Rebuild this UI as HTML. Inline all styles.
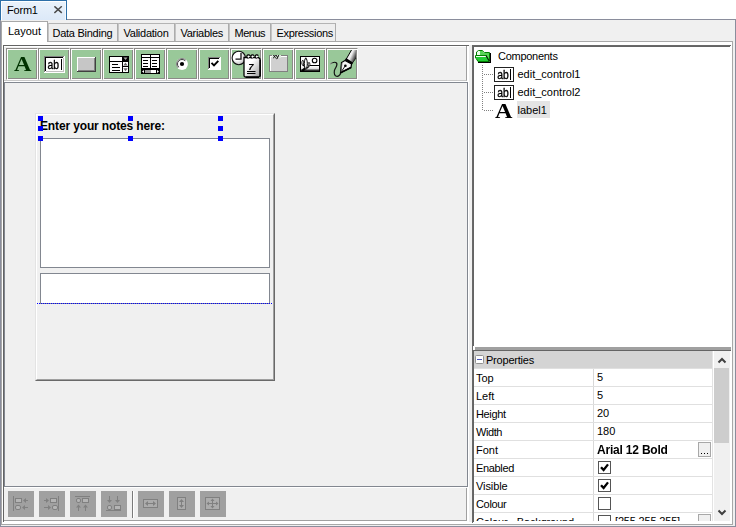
<!DOCTYPE html>
<html><head><meta charset="utf-8"><title>Form1</title>
<style>
html,body{margin:0;padding:0;}
body{width:736px;height:527px;position:relative;overflow:hidden;background:#f0f0f0;font-family:"Liberation Sans",sans-serif;font-size:11px;color:#000;}
.a{position:absolute;box-sizing:border-box;}
.t{position:absolute;white-space:nowrap;line-height:14px;}
.tab{position:absolute;box-sizing:border-box;top:23px;height:18px;border:1px solid;border-color:#b4b4b4 #acacac #acacac #c4c4c4;border-bottom:none;background:#eeeeee;padding-left:4.500px;line-height:18px;white-space:nowrap;}
.tb{position:absolute;box-sizing:border-box;top:48px;width:32px;height:32px;background:#99c899;border:1px solid;border-color:#8c8a88 #fff #fff #8c8a88;box-shadow:inset 1px 1px 0 #fff,inset -1px -1px 0 #8c8a88;}
.bb{position:absolute;box-sizing:border-box;top:491px;width:26px;height:26px;background:#a0a0a0;}
.h{position:absolute;width:5px;height:5px;background:#0000ff;}
.row{position:absolute;left:474px;width:238px;height:19px;box-sizing:border-box;border-top:1px solid #e0e0e0;background:#fff;}
.row .n{position:absolute;left:2px;top:2px;line-height:14px;}
.row .v{position:absolute;left:123px;top:1px;line-height:14px;}
.row .sep{position:absolute;left:119px;top:0;width:1px;height:18px;background:#d8d8d8;}
.cb{position:absolute;left:124px;top:2px;width:13px;height:13px;box-sizing:border-box;border:1px solid #555;background:#fff;}
</style></head><body>

<!-- top document tab strip -->
<div class="a" style="left:0;top:0;width:736px;height:19px;background:#fff;"></div>
<div class="a" style="left:0;top:19px;width:736px;height:1px;background:#8a8d9c;"></div>
<div class="a" style="left:0;top:0;width:67px;height:20px;background:linear-gradient(#eaf2fb,#dce9f8);border:1px solid #2d6fa8;border-bottom:none;box-shadow:inset 1px 1px 0 #fff,inset -1px 0 0 #f4f8fd;"></div>
<div class="t" style="left:7px;top:3px;letter-spacing:-0.2px;">Form1</div>
<svg class="a" style="left:54px;top:6px;" width="9" height="9" viewBox="0 0 9 9"><path d="M0.400 0.300L7.800 6.900M7.800 0.300L0.400 6.900" stroke="#484848" stroke-width="1.450" fill="none"/></svg>

<!-- outer frame -->
<div class="a" style="left:0;top:20px;width:1px;height:507px;background:#8a8d9c;"></div>
<div class="a" style="left:735px;top:20px;width:1px;height:507px;background:#8a8d9c;"></div>
<div class="a" style="left:0;top:526px;width:736px;height:1px;background:#8a8d9c;"></div>
<!-- tab page -->
<div class="a" style="left:1px;top:41px;width:732px;height:484px;background:#fff;border:1px solid #a8a8a8;"></div>

<!-- inner tabs -->
<div class="tab" style="left:48px;width:70px;letter-spacing:-0.26px;padding-left:3.5px;">Data Binding</div>
<div class="tab" style="left:118px;width:57px;letter-spacing:-0.25px;">Validation</div>
<div class="tab" style="left:175px;width:54px;letter-spacing:-0.283px;">Variables</div>
<div class="tab" style="left:229px;width:42px;letter-spacing:-0.506px;">Menus</div>
<div class="tab" style="left:271px;width:65px;letter-spacing:-0.311px;">Expressions</div>
<div class="a" style="left:1px;top:21px;width:47px;height:21px;background:#fff;border:1px solid #a8a8a8;border-bottom:none;padding-left:6px;line-height:19px;white-space:nowrap;">Layout</div>

<!-- left container -->
<div class="a" style="left:3px;top:45px;width:466px;height:477px;background:#fff;border-left:1px solid #646464;border-top:1px solid #646464;"></div>
<!-- toolbar panel -->
<div class="a" style="left:4px;top:47px;width:463px;height:34px;background:#f0f0f0;border-right:1px solid #a0a0a0;border-bottom:1px solid #c8c8c8;"></div>
<div class="a" style="left:466px;top:46px;width:1px;height:1px;background:#a0a0a0;"></div>
<div class="tb" style="left:6px;"></div>
<div class="tb" style="left:38px;"></div>
<div class="tb" style="left:70px;"></div>
<div class="tb" style="left:102px;"></div>
<div class="tb" style="left:134px;"></div>
<div class="tb" style="left:166px;"></div>
<div class="tb" style="left:198px;"></div>
<div class="tb" style="left:230px;"></div>
<div class="tb" style="left:262px;"></div>
<div class="tb" style="left:294px;"></div>
<div class="tb" style="left:326px;"></div>

<!-- toolbar icons (page coordinates) -->
<svg class="a" style="left:0;top:46px;will-change:transform;" width="470" height="36" viewBox="0 46 470 36">
<g shape-rendering="crispEdges">
<!-- 1: A -->
</g>
<text x="22.6" y="71" font-family="Liberation Serif, serif" font-weight="bold" font-size="21" text-anchor="middle" fill="#003300" transform="translate(22.6 0) scale(1.15 1) translate(-22.6 0)">A</text>
<g shape-rendering="crispEdges">
<!-- 2: edit -->
<rect x="44" y="56" width="21" height="17" fill="#fff"/>
<rect x="44" y="56" width="20" height="1" fill="#808080"/><rect x="44" y="56" width="1" height="16" fill="#808080"/>
<rect x="45" y="57" width="18" height="1" fill="#000"/><rect x="45" y="57" width="1" height="14" fill="#000"/>
<rect x="46" y="71" width="18" height="1" fill="#c0c0c0"/><rect x="63" y="58" width="1" height="14" fill="#c0c0c0"/>
<rect x="61" y="59" width="1" height="11" fill="#000"/>
</g>
<text x="47.6" y="69" font-size="12" textLength="11.5" lengthAdjust="spacingAndGlyphs" fill="#000" stroke="#000" stroke-width="0.350">ab</text>
<g shape-rendering="crispEdges">
<!-- 3: button -->
<rect x="77" y="57" width="19" height="15" fill="#c6c6c6"/>
<rect x="77" y="57" width="18" height="1" fill="#fff"/><rect x="77" y="57" width="1" height="14" fill="#fff"/>
<rect x="78" y="70" width="17" height="1" fill="#808080"/><rect x="94" y="58" width="1" height="13" fill="#808080"/>
<rect x="77" y="71" width="19" height="1" fill="#404040"/><rect x="95" y="57" width="1" height="15" fill="#404040"/>
<!-- 4: combo/list -->
<rect x="109" y="56" width="20" height="17" fill="#000"/>
<rect x="110" y="57" width="12" height="4" fill="#fff"/>
<rect x="123" y="57" width="5" height="4" fill="#000"/>
<rect x="110" y="62" width="12" height="10" fill="#fff"/>
<rect x="112" y="64" width="6" height="1" fill="#000"/><rect x="112" y="67" width="8" height="1" fill="#000"/><rect x="112" y="70" width="8" height="1" fill="#000"/>
<rect x="123" y="62" width="5" height="4" fill="#fff"/><rect x="123" y="67" width="5" height="5" fill="#fff"/>
</g>
<path d="M123.5 57.5h4l-2 2.5z" fill="#aaa"/><path d="M123.3 65.6h4.4l-2.2-3z" fill="#666"/><path d="M123.3 68.2h4.4l-2.2 3z" fill="#666"/>
<g shape-rendering="crispEdges">
<!-- 5: list view -->
<rect x="141" y="54" width="19" height="20" fill="#000"/>
<rect x="142" y="55" width="8" height="2" fill="#fff"/><rect x="151" y="55" width="8" height="2" fill="#fff"/>
<rect x="142" y="58" width="8" height="10" fill="#fff"/><rect x="151" y="58" width="8" height="10" fill="#fff"/>
<rect x="143" y="60" width="5" height="1" fill="#000"/><rect x="143" y="63" width="5" height="1" fill="#000"/><rect x="143" y="66" width="5" height="1" fill="#000"/>
<rect x="152" y="60" width="5" height="1" fill="#000"/><rect x="152" y="63" width="5" height="1" fill="#000"/><rect x="152" y="66" width="5" height="1" fill="#000"/>
<rect x="145" y="70" width="6" height="3" fill="#999"/><rect x="151" y="70" width="5" height="3" fill="#fff"/>
</g>
<path d="M144 70v3l-2-1.5zM157 70v3l2-1.5z" fill="#fff"/>
<!-- 6: radio -->
<circle cx="182" cy="64" r="5.9" fill="#fff"/>
<path d="M178.1 67.9A5.5 5.500 0 0 1 185.900 60.100" stroke="#808080" stroke-width="1" fill="none"/>
<path d="M178.800 67.200A4.500 4.500 0 0 1 185.200 60.800" stroke="#404040" stroke-width="1" fill="none"/>
<circle cx="182" cy="64" r="2.100" fill="#000"/>
<g shape-rendering="crispEdges">
<!-- 7: checkbox -->
<rect x="208" y="57" width="13" height="13" fill="#fff"/>
<rect x="208" y="57" width="12" height="1" fill="#808080"/><rect x="208" y="57" width="1" height="12" fill="#808080"/>
<rect x="209" y="58" width="10" height="1" fill="#000"/><rect x="209" y="58" width="1" height="10" fill="#000"/>
</g>
<path d="M211.5 62.8l2.5 2.6l4.3-4.6" stroke="#000" stroke-width="1.9" fill="none"/>
<!-- 8: date/time -->
<defs><radialGradient id="kg" cx="0.35" cy="0.35" r="0.8"><stop offset="0.4" stop-color="#fff"/><stop offset="1" stop-color="#aaa"/></radialGradient>
<linearGradient id="cg" x1="0" y1="0" x2="1" y2="1"><stop offset="0.35" stop-color="#fff"/><stop offset="1" stop-color="#9a9a9a"/></linearGradient>
<linearGradient id="ig" x1="0" y1="0" x2="0" y2="1"><stop offset="0" stop-color="#fff"/><stop offset="0.5" stop-color="#e0e0e0"/><stop offset="1" stop-color="#000"/></linearGradient>
<linearGradient id="pg" x1="0" y1="0" x2="1" y2="0.6"><stop offset="0" stop-color="#fff"/><stop offset="0.55" stop-color="#eee"/><stop offset="1" stop-color="#222"/></linearGradient></defs>
<circle cx="238.8" cy="58" r="6.7" fill="url(#kg)" stroke="#111" stroke-width="1.1"/>
<path d="M241 53v6.200h-5.500" stroke="#111" stroke-width="1.3" fill="none"/>
<path d="M244 57.500h14.500l1.500 1.500v16.500a1.500 1.500 0 0 1 -1.500 1.500h-13a1.500 1.500 0 0 1 -1.500 -1.500z" fill="url(#cg)" stroke="#000" stroke-width="1.3"/>
<path d="M260.300 60v16.500M246 77.300h13" stroke="#000" stroke-width="1.2"/>
<path d="M248.500 58.200a1.700 1.700 0 1 1 1.500 -2.500M252.500 58.200a1.700 1.700 0 1 1 1.500 -2.500M256.800 58.200a1.700 1.700 0 1 1 1.500 -2.500" stroke="#000" stroke-width="1.2" fill="#fff"/>
<text x="251" y="69.500" font-size="9.500" font-weight="bold" font-style="italic" text-anchor="middle" fill="#000">7</text>
<path d="M247 71.500h8.500M247 73.500h8.500" stroke="#000" stroke-width="1"/>
<g shape-rendering="crispEdges">
<!-- 9: group box -->
<rect x="269" y="55" width="19" height="17" fill="#808080"/>
<rect x="270" y="56" width="17" height="15" fill="#fff"/>
<rect x="271" y="57" width="16" height="14" fill="#d0d0d0"/>
<rect x="272" y="55" width="9" height="3" fill="#dde8dd"/>
</g>
<text x="273" y="57.800" font-size="6" fill="#000" stroke="#000" stroke-width="0.250">xy</text>
<g shape-rendering="crispEdges">
<!-- 10: image -->
<rect x="300" y="56" width="20" height="16" fill="#000"/>
<rect x="301" y="57" width="18" height="9" fill="#fff"/>
<rect x="301" y="66" width="18" height="5" fill="url(#ig)"/>
<rect x="308" y="65" width="11" height="1" fill="#000"/>
</g>
<circle cx="314.600" cy="60.500" r="2.300" fill="#fff" stroke="#000" stroke-width="1.100"/>
<path d="M301.500 71l0.500-1.500l3-2.500l1.500 1l-2.500 3z" fill="#000"/>
<path d="M302.800 60.200c-1.300 1.200-1.300 4 0 5.200c1.300-1.200 1.300-4 0-5.200z" fill="#fff" stroke="#000" stroke-width="0.900"/>
<path d="M309 62.300c-1.200 1-1.200 3.200 0 4.200c1.200-1 1.200-3.200 0-4.200z" fill="#fff" stroke="#000" stroke-width="0.900"/>
<path d="M303 65.300l2 1.200M308.800 66.500l-2 1.800" stroke="#000" stroke-width="1.100"/>
<path d="M305.800 57.800c-2 2.500-2 9 0 11.700c2-2.700 2-9.200 0-11.700z" fill="#fff" stroke="#000" stroke-width="1"/>
<!-- 11: pen -->
<defs><linearGradient id="sq" x1="0" y1="0" x2="1" y2="0"><stop offset="0" stop-color="#b0b0b0"/><stop offset="0.35" stop-color="#111"/></linearGradient></defs>
<path d="M351.500 50L346 59.500l6 4l4-5.500V50z" fill="url(#pg)"/>
<path d="M351.500 50L346 59.500" stroke="#000" stroke-width="1"/>
<path d="M356 58l-4 5.500" stroke="#222" stroke-width="1"/>
<path d="M345.500 59l7 4.800" stroke="#000" stroke-width="2.400"/>
<path d="M345 60.500l-3.500 2l-1 10.300l10.500-5.300l0.500-3.500z" fill="#f4f4f4" stroke="#000" stroke-width="1.200"/>
<path d="M351 67.500l-10.500 5.300" stroke="#000" stroke-width="1.800"/>
<path d="M345.400 65.700l-4.900 7.100" stroke="#000" stroke-width="0.900"/>
<circle cx="345.400" cy="65.700" r="1.300" fill="#000"/>
<path d="M342 63l-1 9" stroke="#555" stroke-width="0.800"/>
<path d="M329.500 64.300c2-1.300 5.500-2.800 7-1.300c1.500 1.800-0.500 4-1.500 6c-1 2-1.200 5.500 0.500 6.700c1.500 1 3.500 0.300 4.500-1l0.800-1.700" stroke="url(#sq)" stroke-width="1.200" fill="none"/>
</svg>

<!-- canvas -->
<div class="a" style="left:4px;top:82px;width:464px;height:405px;background:#f0f0f0;border:1px solid #828790;"></div>
<!-- bottom toolbar panel -->
<div class="a" style="left:4px;top:488px;width:463px;height:33px;background:#f0f0f0;border-right:1px solid #a0a0a0;border-bottom:1px solid #a0a0a0;"></div>
<!-- splitter -->
<div class="a" style="left:469px;top:45px;width:3px;height:477px;background:#f0f0f0;"></div>

<!-- form panel -->
<div class="a" style="left:35px;top:113px;width:240px;height:268px;border:1px solid;border-color:#e3e3e3 #696969 #696969 #e3e3e3;"></div>
<div class="a" style="left:36px;top:114px;width:238px;height:266px;border:1px solid;border-color:#fff #a0a0a0 #a0a0a0 #fff;"></div>
<div class="t" style="left:40px;top:119px;font-weight:bold;font-size:12px;line-height:14px;letter-spacing:-0.14px;">Enter your notes here:</div>
<div class="a" style="left:40px;top:138px;width:230px;height:130px;background:#fff;border:1px solid #828790;"></div>
<div class="a" style="left:40px;top:273px;width:230px;height:31px;background:#fff;border:1px solid #828790;"></div>
<div class="a" style="left:37px;top:303px;width:235px;height:1px;background:repeating-linear-gradient(90deg,#0000ff 0,#0000ff 1px,transparent 1px,transparent 2px);"></div>
<div class="h" style="left:38px;top:116px;"></div>
<div class="h" style="left:38px;top:126px;"></div>
<div class="h" style="left:38px;top:136px;"></div>
<div class="h" style="left:128px;top:116px;"></div>
<div class="h" style="left:128px;top:136px;"></div>
<div class="h" style="left:218px;top:116px;"></div>
<div class="h" style="left:218px;top:126px;"></div>
<div class="h" style="left:218px;top:136px;"></div>

<!-- bottom toolbar -->
<div class="bb" style="left:8px;"></div>
<div class="bb" style="left:39px;"></div>
<div class="bb" style="left:70px;"></div>
<div class="bb" style="left:101px;"></div>
<div class="a" style="left:132px;top:491px;width:1px;height:27px;background:#7a7a7a;"></div>
<div class="a" style="left:133px;top:491px;width:1px;height:27px;background:#fff;"></div>
<div class="bb" style="left:138px;"></div>
<div class="bb" style="left:169px;"></div>
<div class="bb" style="left:200px;"></div>
<svg class="a" style="left:0;top:488px;" width="240" height="34" viewBox="0 488 240 34">
<g stroke="#808080" stroke-width="1" fill="none">
<!-- b1 -->
<path d="M13.500 496V511"/><rect x="15.500" y="498.500" width="6" height="4" fill="#b4b4b4"/><rect x="15.500" y="505.500" width="5" height="4" rx="1.500" fill="#b4b4b4"/>
<path d="M24 500.5H28"/><path d="M23 500.5l3-2.500v5z" fill="#808080" stroke="none"/><path d="M23 507.5H28"/><path d="M22 507.5l3-2.500v5z" fill="#808080" stroke="none"/>
<!-- b2 -->
<path d="M58.500 496V511"/><rect x="50.500" y="498.500" width="6" height="4" fill="#b4b4b4"/><rect x="52.500" y="505.500" width="5" height="4" rx="1.500" fill="#b4b4b4"/>
<path d="M44 500.5H48"/><path d="M49 500.5l-3-2.500v5z" fill="#808080" stroke="none"/><path d="M44 507.5H50"/><path d="M51 507.5l-3-2.500v5z" fill="#808080" stroke="none"/>
<!-- b3 -->
<path d="M75 496.500H90"/><rect x="76.500" y="498.500" width="4" height="4" rx="1.500" fill="#b4b4b4"/><rect x="82.500" y="498.500" width="6" height="4" fill="#b4b4b4"/>
<path d="M78.5 505.5V511"/><path d="M78.5 504.5l-2.500 3h5z" fill="#808080" stroke="none"/><path d="M85.5 505.5V511"/><path d="M85.5 504.5l-2.500 3h5z" fill="#808080" stroke="none"/>
<!-- b4 -->
<path d="M106 510.500H121"/><rect x="107.500" y="505.500" width="4" height="4" rx="1.500" fill="#b4b4b4"/><rect x="114.500" y="505.500" width="6" height="4" fill="#b4b4b4"/>
<path d="M109.5 496V502"/><path d="M109.5 503l-2.500-3h5z" fill="#808080" stroke="none"/><path d="M117.5 496V502"/><path d="M117.5 503l-2.500-3h5z" fill="#808080" stroke="none"/>
<!-- b5 -->
<rect x="143.500" y="499.500" width="14" height="8" fill="#acacac"/>
<path d="M146 503.5H151"/><path d="M145 503.5l3-2.500v5z" fill="#808080" stroke="none"/><path d="M150 503.5H155"/><path d="M156 503.5l-3-2.500v5z" fill="#808080" stroke="none"/>
<!-- b6 -->
<rect x="177.500" y="497.500" width="8" height="12" fill="#acacac"/>
<path d="M181.5 500V504"/><path d="M181.5 499l-2.500 3h5z" fill="#808080" stroke="none"/><path d="M181.5 503V507"/><path d="M181.5 508l-2.500-3h5z" fill="#808080" stroke="none"/>
<!-- b7 -->
<rect x="205.500" y="497.500" width="14" height="12" fill="#acacac"/>
<path d="M208 503.500H217M212.500 500V507"/>
<path d="M206.500 503.500l2.500-2v4zM218.500 503.500l-2.500-2v4zM212.500 498.500l-2 2.500h4zM212.500 508.500l-2-2.500h4z" fill="#808080" stroke="none"/>
</g>
</svg>

<!-- tree panel -->
<div class="a" style="left:472px;top:45px;width:259px;height:478px;background:#fff;border-left:1px solid #696969;border-top:1px solid #696969;"></div>
<div class="a" style="left:473px;top:46px;width:257px;height:300px;border-left:1px solid #646464;border-top:1px solid #646464;"></div>
<div class="a" style="left:475px;top:347px;width:256px;height:3px;background:#a0a0a0;"></div>
<div class="a" style="left:472px;top:350px;width:259px;height:1px;background:#646464;"></div>
<div class="a" style="left:473px;top:351px;width:1px;height:171px;background:#646464;"></div>
<div class="t" style="letter-spacing:-0.277px;left:498px;top:49px;">Components</div>
<div class="t" style="left:517.500px;top:67px;">edit_control1</div>
<div class="t" style="left:517.500px;top:85px;">edit_control2</div>
<div class="a" style="left:517px;top:101px;width:33px;height:17px;background:#e4e4e4;"></div>
<div class="t" style="left:517.500px;top:103px;">label1</div>
<svg class="a" style="left:474px;top:47px;will-change:transform;" width="50" height="75" viewBox="474 47 50 75">
<!-- folder -->
<path d="M477 51h6l1 2h5v8h-12z" fill="#55d455"/>
<path d="M477 51h3v4h-3z" fill="#e8ffe8"/>
<path d="M476 56h10.500l3 5.500h-11.500l-2-4z" fill="#22cc33"/>
<path d="M476 56.500h10" stroke="#f2fff2" stroke-width="1"/>
<path d="M478.500 50.500h4l1 1l1 1h5v9" stroke="#008000" stroke-width="1" fill="none"/>
<path d="M478.500 50.500l-2 1.500v3.500" stroke="#008000" stroke-width="1" fill="none"/>
<path d="M475.500 58v-2.500h11" stroke="#008000" stroke-width="1" fill="none"/>
<path d="M475.500 57.500l2.500 4h11" stroke="#008000" stroke-width="1" fill="none"/>
<path d="M486 55.500l3.500 6" stroke="#002000" stroke-width="1.200" fill="none"/>
<path d="M490.500 53v9.500M478 62.500h13" stroke="#000" stroke-width="1" fill="none"/>
<!-- dotted lines -->
<g shape-rendering="crispEdges" stroke="#808080" stroke-width="1" stroke-dasharray="1 1" fill="none">
<path d="M482.500 65V111"/><path d="M484 74.500H493"/><path d="M484 92.500H493"/><path d="M484 110.500H493"/>
</g>
<g shape-rendering="crispEdges"><rect x="494.5" y="67.5" width="19" height="14" fill="#fff" stroke="#222" stroke-width="1"/><rect x="510" y="69" width="1" height="11" fill="#000"/></g>
<text x="497.3" y="79" font-size="12" textLength="11.500" lengthAdjust="spacingAndGlyphs" fill="#000" stroke="#000" stroke-width="0.350">ab</text>
<g shape-rendering="crispEdges"><rect x="494.5" y="85.5" width="19" height="14" fill="#fff" stroke="#222" stroke-width="1"/><rect x="510" y="87" width="1" height="11" fill="#000"/></g>
<text x="497.3" y="97" font-size="12" textLength="11.500" lengthAdjust="spacingAndGlyphs" fill="#000" stroke="#000" stroke-width="0.350">ab</text>
<text x="503.600" y="118" font-family="Liberation Serif, serif" font-weight="bold" font-size="21" text-anchor="middle" fill="#000" transform="translate(503.600 0) scale(1.150 1) translate(-503.600 0)">A</text>
</svg>

<!-- properties -->
<div class="a" style="left:474px;top:351px;width:238px;height:17px;background:#d4d4d4;"></div>
<div class="a" style="left:475px;top:355px;width:9px;height:9px;background:#fff;border:1px solid #919191;border-radius:1.500px;"></div>
<div class="a" style="left:477px;top:359px;width:5px;height:1px;background:#4a55b8;"></div>
<div class="t" style="letter-spacing:-0.214px;left:486px;top:353px;">Properties</div>
<div class="row" style="top:368px;"><span class="n">Top</span><span class="sep"></span><span class="v">5</span></div>
<div class="row" style="top:386px;"><span class="n">Left</span><span class="sep"></span><span class="v">5</span></div>
<div class="row" style="top:404px;"><span class="n" style="letter-spacing:-0.367px;">Height</span><span class="sep"></span><span class="v">20</span></div>
<div class="row" style="top:422px;"><span class="n" style="letter-spacing:-0.425px;">Width</span><span class="sep"></span><span class="v">180</span></div>
<div class="row" style="top:440px;"><span class="n">Font</span><span class="sep"></span><span class="v" style="font-weight:bold;font-size:12px;letter-spacing:-0.2px;top:2px;will-change:transform;">Arial 12 Bold</span><span class="a" style="left:224px;top:1px;width:13px;height:15px;background:#f0f0f0;border:1px solid #a8a8a8;"></span><span class="a" style="left:227px;top:12px;width:7px;height:1px;background:repeating-linear-gradient(90deg,#000 0,#000 1px,transparent 1px,transparent 3px);"></span></div>
<div class="row" style="top:458px;"><span class="n" style="letter-spacing:-0.339px;">Enabled</span><span class="sep"></span><span class="cb"><svg width="11" height="11" viewBox="0 0 11 11" style="position:absolute;left:0;top:0"><path d="M2 5.200l2.600 2.700l4.400-5.500" stroke="#000" stroke-width="2.300" fill="none"/></svg></span></div>
<div class="row" style="top:476px;"><span class="n" style="letter-spacing:-0.1px;">Visible</span><span class="sep"></span><span class="cb"><svg width="11" height="11" viewBox="0 0 11 11" style="position:absolute;left:0;top:0"><path d="M2 5.200l2.600 2.700l4.400-5.500" stroke="#000" stroke-width="2.300" fill="none"/></svg></span></div>
<div class="row" style="top:494px;"><span class="n" style="letter-spacing:-0.333px;">Colour</span><span class="sep"></span><span class="cb"></span></div>
<div class="row" style="top:512px;height:9px;overflow:hidden;border-bottom:none;"><span class="n" style="letter-spacing:-0.153px;">Colour - Background</span><span class="sep"></span><span class="cb"></span><span class="v" style="letter-spacing:-0.177px;left:141px;">[255,255,255]</span><span class="a" style="left:224px;top:1px;width:13px;height:15px;background:#f0f0f0;border:1px solid #a8a8a8;"></span></div>
<div class="a" style="left:712px;top:351px;width:1px;height:170px;background:#e3e3e3;"></div>
<div class="a" style="left:714px;top:351px;width:16px;height:170px;background:#f0f0f0;"></div>
<div class="a" style="left:714px;top:368px;width:15px;height:75px;background:#cdcdcd;"></div>
<svg class="a" style="left:714px;top:351px;" width="16" height="170" viewBox="0 0 16 170"><path d="M4.500 11.500l3.500-3.500l3.500 3.500M4.500 159.500l3.500 3.500l3.500-3.500" stroke="#404040" stroke-width="2" fill="none"/></svg>

</body></html>
